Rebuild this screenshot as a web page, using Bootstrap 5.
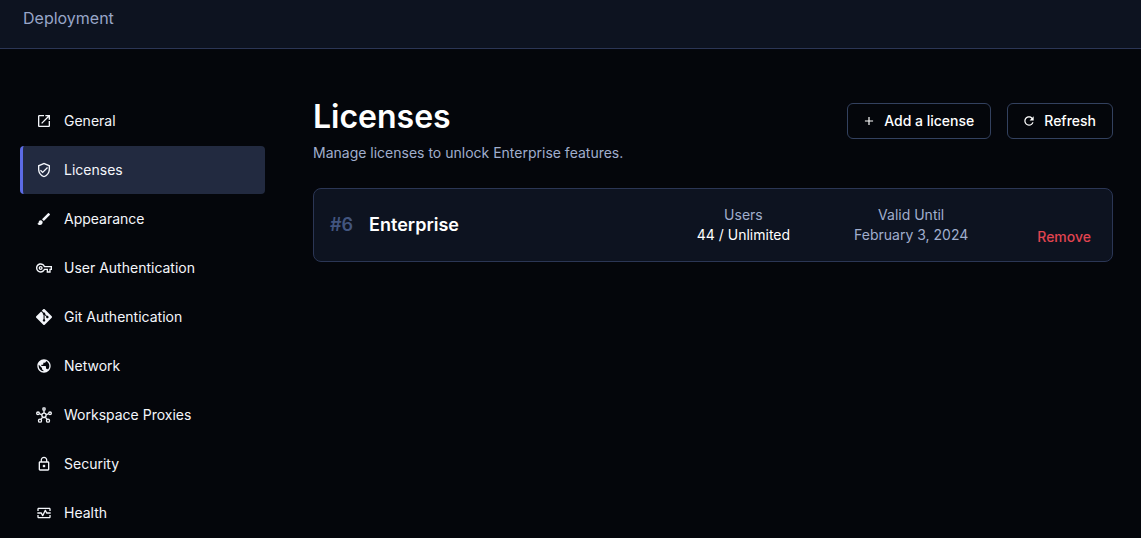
<!DOCTYPE html>
<html lang="en" data-bs-theme="dark">
<head>
<meta charset="utf-8">
<meta name="viewport" content="width=device-width, initial-scale=1">
<title>Licenses - Deployment</title>
<link href="https://cdn.jsdelivr.net/npm/bootstrap@5.3.0/dist/css/bootstrap.min.css" rel="stylesheet">
<style>
  body { background: #04060b; color: #fff; font-family: Inter, "Liberation Sans", sans-serif; font-size: 14px; line-height: 20px; }
  svg { fill: currentColor; flex-shrink: 0; }
  .topbar { background: #0d1320; border-bottom: 1px solid #2b3655; padding: 6px 23px 18px; font-size: 16px; line-height: 24px; color: #98a6c8; }
  .page-body { padding: 48px 28px 0 20px; gap: 48px; }
  .side-nav { width: 245px; gap: 1px; }
  .side-nav .nav-link { display: flex; align-items: center; gap: 12px; height: 48px; padding: 0 16px 0 13px; border-left: 3px solid transparent; border-radius: 4px; color: #f4f6fb; }
  .side-nav .nav-link.active { background: #222a40; border-left-color: #5c6be6; }
  .page-head { margin-bottom: 25px; }
  .page-title { font-size: 32px; line-height: 40px; font-weight: 600; margin-bottom: 6px; }
  .page-actions { padding-top: 6px; }
  .muted-text { color: #a0aecd; }
  .btn-line { --bs-btn-color: #fff; --bs-btn-border-color: #33415f; --bs-btn-hover-color: #fff; --bs-btn-hover-bg: #141b2c; --bs-btn-hover-border-color: #47587f; font-size: 14px; line-height: 20px; font-weight: 500; height: 36px; padding: 0 16px 0 14px; border-radius: 6px; }
  .license { --bs-card-bg: #0d1320; --bs-card-border-color: #2b3655; --bs-card-border-radius: 8px; --bs-card-color: #fff; min-height: 74px; padding: 6px 16px; }
  .license-name { font-size: 18px; line-height: 24px; font-weight: 600; }
  .license-id { color: #42557f; }
  .license-facts { gap: 64px; }
  .btn-remove { --bs-btn-color: #e04450; --bs-btn-hover-color: #f0606b; font-size: 14px; line-height: 20px; font-weight: 500; padding: 8px 5px; margin-left: 64px; }
</style>
</head>
<body>
<header class="topbar">Deployment</header>
<div class="page-body d-flex align-items-start">
  <nav class="side-nav nav flex-column flex-shrink-0" aria-label="Deployment settings">
    <a class="nav-link" href="#general"><svg width="16" height="16" viewBox="0 0 24 24" aria-hidden="true"><path d="M19 19H5V5h7V3H5c-1.11 0-2 .9-2 2v14c0 1.1.89 2 2 2h14c1.1 0 2-.9 2-2v-7h-2v7zM14 3v2h3.59l-9.83 9.83 1.41 1.41L19 6.41V10h2V3h-7z"/></svg>General</a>
    <a class="nav-link active" aria-current="page" href="#licenses"><svg width="16" height="16" viewBox="0 0 24 24" aria-hidden="true"><path d="M12 1 3 5v6c0 5.55 3.84 10.74 9 12 5.16-1.26 9-6.45 9-12V5l-9-4zm7 10c0 4.52-2.98 8.69-7 9.93-4.02-1.24-7-5.41-7-9.93V6.3l7-3.11 7 3.11V11zm-11.59.59L6 13l4 4 8-8-1.41-1.42L10 14.17z"/></svg>Licenses</a>
    <a class="nav-link" href="#appearance"><svg width="16" height="16" viewBox="0 0 24 24" aria-hidden="true"><path d="M7 14c-1.66 0-3 1.34-3 3 0 1.31-1.16 2-2 2 .92 1.22 2.49 2 4 2 2.21 0 4-1.79 4-4 0-1.66-1.34-3-3-3zm13.71-9.37-1.34-1.34a1 1 0 0 0-1.41 0L9 12.25 11.75 15l8.96-8.96c.39-.39.39-1.02 0-1.41z"/></svg>Appearance</a>
    <a class="nav-link" href="#userauth"><svg width="16" height="16" viewBox="0 0 24 24" aria-hidden="true"><path d="M22 19h-6v-4h-2.68c-1.14 2.42-3.6 4-6.32 4-3.86 0-7-3.14-7-7s3.14-7 7-7c2.72 0 5.17 1.58 6.32 4H24v6h-2v4zm-4-2h2v-4h2v-2H11.94l-.23-.67C11.01 8.34 9.11 7 7 7c-2.76 0-5 2.24-5 5s2.24 5 5 5c2.11 0 4.01-1.34 4.71-3.33l.23-.67H18v4zM7 15c-1.65 0-3-1.35-3-3s1.35-3 3-3 3 1.35 3 3-1.35 3-3 3zm0-4c-.55 0-1 .45-1 1s.45 1 1 1 1-.45 1-1-.45-1-1-1z"/></svg>User Authentication</a>
    <a class="nav-link" href="#gitauth"><svg width="16" height="16" viewBox="0 0 24 24" aria-hidden="true"><path d="M23.546 10.93L13.067.452c-.604-.603-1.582-.603-2.188 0L8.708 2.627l2.76 2.76c.645-.215 1.379-.07 1.889.441.516.515.658 1.258.438 1.9l2.658 2.66c.645-.223 1.387-.078 1.9.435.721.72.721 1.884 0 2.604-.719.719-1.881.719-2.6 0-.539-.541-.674-1.337-.404-1.996L12.86 8.955v6.525c.176.086.342.203.488.348.713.721.713 1.883 0 2.6-.719.721-1.889.721-2.609 0-.719-.719-.719-1.879 0-2.598.182-.18.387-.316.605-.406V8.835c-.217-.091-.424-.222-.6-.401-.545-.545-.676-1.342-.396-2.009L7.636 3.7.45 10.881c-.6.605-.6 1.584 0 2.189l10.48 10.477c.604.604 1.582.604 2.186 0l10.43-10.43c.605-.603.605-1.582 0-2.187"/></svg>Git Authentication</a>
    <a class="nav-link" href="#network"><svg width="16" height="16" viewBox="0 0 24 24" aria-hidden="true"><path d="M12 2C6.48 2 2 6.48 2 12s4.48 10 10 10 10-4.48 10-10S17.52 2 12 2zm-1 17.93c-3.95-.49-7-3.85-7-7.93 0-.62.08-1.21.21-1.79L9 15v1c0 1.1.9 2 2 2v1.93zm6.9-2.54c-.26-.81-1-1.39-1.9-1.39h-1v-3c0-.55-.45-1-1-1H8v-2h2c.55 0 1-.45 1-1V7h2c1.1 0 2-.9 2-2v-.41c2.93 1.19 5 4.06 5 7.41 0 2.08-.8 3.97-2.1 5.39z"/></svg>Network</a>
    <a class="nav-link" href="#proxies"><svg width="16" height="16" viewBox="0 0 24 24" aria-hidden="true"><circle cx="12" cy="3" r="3" opacity=".8"/><g fill="none" stroke="currentColor" stroke-width="2"><path d="M12 5v4M5.5 10.3l3.2 1.2M18.5 10.3l-3.2 1.2M7.5 18.6l2.3-3.2M16.5 18.6l-2.3-3.2"/><circle cx="12" cy="12.5" r="3.2"/><circle cx="3" cy="9.5" r="2"/><circle cx="21" cy="9.5" r="2"/><circle cx="6" cy="20.5" r="2.3"/><circle cx="18" cy="20.5" r="2.3"/></g></svg>Workspace Proxies</a>
    <a class="nav-link" href="#security"><svg width="16" height="16" viewBox="0 0 24 24" aria-hidden="true"><path d="M12 17c1.1 0 2-.9 2-2s-.9-2-2-2-2 .9-2 2 .9 2 2 2zm6-9h-1V6c0-2.76-2.24-5-5-5S7 3.24 7 6v2H6c-1.1 0-2 .9-2 2v10c0 1.1.9 2 2 2h12c1.1 0 2-.9 2-2V10c0-1.1-.9-2-2-2zM8.9 6c0-1.71 1.39-3.1 3.1-3.1s3.1 1.39 3.1 3.1v2H8.9V6zM18 20H6V10h12v10z"/></svg>Security</a>
    <a class="nav-link" href="#health"><svg width="16" height="16" viewBox="0 0 24 24" aria-hidden="true"><path d="M20 4H4c-1.1 0-2 .9-2 2v3h2V6h16v3h2V6c0-1.1-.9-2-2-2zm0 14H4v-3H2v3c0 1.1.9 2 2 2h16c1.1 0 2-.9 2-2v-3h-2v3z"/><path d="M14.89 7.55c-.34-.68-1.45-.68-1.79 0L10 13.76l-1.11-2.21A1 1 0 0 0 8 11H2v2h5.38l1.72 3.45c.18.34.52.55.9.55s.72-.21.89-.55L14 10.24l1.11 2.21c.17.34.51.55.89.55h6v-2h-5.38l-1.73-3.45z"/></svg>Health</a>
  </nav>
  <main class="flex-grow-1">
    <div class="page-head d-flex justify-content-between align-items-start">
      <div>
        <h1 class="page-title">Licenses</h1>
        <p class="muted-text mb-0">Manage licenses to unlock Enterprise features.</p>
      </div>
      <div class="page-actions d-flex gap-3">
        <button type="button" class="btn btn-line d-flex align-items-center gap-2"><svg width="14" height="14" viewBox="0 0 24 24" aria-hidden="true"><path d="M19 13h-6v6h-2v-6H5v-2h6V5h2v6h6v2z"/></svg>Add a license</button>
        <button type="button" class="btn btn-line d-flex align-items-center gap-2"><svg width="14" height="14" viewBox="0 0 24 24" aria-hidden="true"><path d="M17.65 6.35C16.2 4.9 14.21 4 12 4c-4.42 0-7.99 3.58-7.99 8s3.57 8 7.99 8c3.73 0 6.84-2.55 7.73-6h-2.08c-.82 2.33-3.04 4-5.65 4-3.31 0-6-2.69-6-6s2.69-6 6-6c1.66 0 3.14.69 4.22 1.78L13 11h7V4l-2.35 2.35z"/></svg>Refresh</button>
      </div>
    </div>
    <section class="card license flex-row justify-content-between">
      <div class="license-name d-flex gap-3 align-self-center"><span class="license-id">#6</span><span>Enterprise</span></div>
      <div class="d-flex">
        <div class="license-facts d-flex text-center align-self-center">
          <div><div class="muted-text">Users</div><div>44 / Unlimited</div></div>
          <div class="muted-text"><div>Valid Until</div><div>February 3, 2024</div></div>
        </div>
        <button type="button" class="btn btn-remove border-0 align-self-end">Remove</button>
      </div>
    </section>
  </main>
</div>
<script src="https://cdn.jsdelivr.net/npm/bootstrap@5.3.0/dist/js/bootstrap.bundle.min.js"></script>
</body>
</html>
